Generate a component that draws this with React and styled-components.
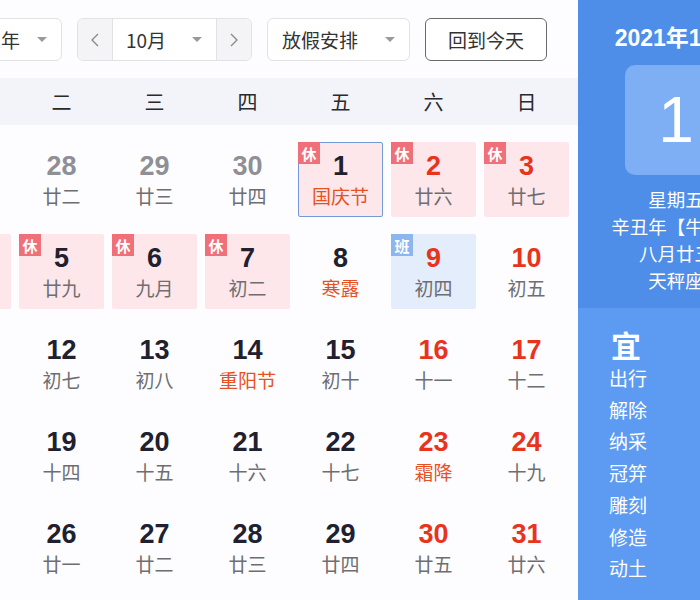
import React from 'react';
import styled, { createGlobalStyle } from 'styled-components';

const GlobalStyle = createGlobalStyle`
  html, body { margin: 0; padding: 0; background: #fdfdff; overflow: hidden; }
  body { font-family: "Liberation Sans", "Noto Sans CJK SC", sans-serif; }
  * { box-sizing: border-box; }
`;

const Widget = styled.div`
  display: flex;
  width: 852px;
  height: 600px;
  margin-left: -78px;
`;

const Main = styled.div`
  flex: none;
  width: 656px;
  display: flex;
  flex-direction: column;
`;

const Toolbar = styled.div`
  display: flex;
  gap: 15px;
  padding: 18px 0 0 28px;
  height: 61px;
  margin-bottom: 17px;
`;

const Select = styled.div`
  display: flex;
  align-items: center;
  justify-content: ${(p) => (p.$tight ? 'flex-end' : 'space-between')};
  gap: 17px;
  width: ${(p) => p.$w}px;
  height: 43px;
  padding: 0 14px 0 ${(p) => p.$pl || 14}px;
  border: 1px solid #e2e2e6;
  border-radius: 6px;
  background: #fff;
  font-family: "Noto Sans CJK SC", "Liberation Sans", sans-serif;
  font-size: 19px;
  color: #333;
  white-space: nowrap;
`;

const Caret = styled.span`
  flex: none;
  width: 0;
  height: 0;
  border-left: 5px solid transparent;
  border-right: 5px solid transparent;
  border-top: 5px solid #9a9a9a;
`;

const Group = styled.div`
  display: flex;
  height: 43px;
  border: 1px solid #e2e2e6;
  border-radius: 6px;
  overflow: hidden;
  background: #fff;
`;

const Arrow = styled.div`
  width: 35px;
  display: flex;
  align-items: center;
  justify-content: center;
  background: #f4f4f6;
  border-${(p) => (p.$side === 'left' ? 'right' : 'left')}: 1px solid #e2e2e6;
`;

const GroupSelect = styled(Select)`
  border: none;
  border-radius: 0;
  height: 41px;
`;

const TodayButton = styled.div`
  width: 122px;
  height: 43px;
  display: flex;
  align-items: center;
  justify-content: center;
  border: 1px solid #6a6a6e;
  border-radius: 6px;
  background: #fff;
  font-family: "Noto Sans CJK SC", sans-serif;
  font-size: 19px;
  color: #333;
`;

const WeekBand = styled.div`
  display: grid;
  grid-template-columns: repeat(7, 93px);
  height: 47px;
  align-items: center;
  background: #f2f4fa;
  font-family: "Noto Sans CJK SC", sans-serif;
  font-size: 20px;
  color: #2a2a2a;
  text-align: center;
`;

const Grid = styled.div`
  display: grid;
  grid-template-columns: repeat(7, 93px);
  grid-auto-rows: 75px;
  row-gap: 17px;
  padding-top: 17px;
`;

const Cell = styled.div`
  position: relative;
  margin: 0 4px;
  display: flex;
  flex-direction: column;
  align-items: center;
  padding-top: 9px;
  border-radius: 2px;
  background: ${(p) => (p.$kind === 'rest' ? '#fde7ea' : p.$kind === 'work' ? '#e3edfb' : 'transparent')};
  border: 1px solid ${(p) => (p.$selected ? '#7399d6' : 'transparent')};
`;

const Badge = styled.span`
  position: absolute;
  top: -1px;
  left: -1px;
  width: 22px;
  height: 22px;
  display: flex;
  align-items: center;
  justify-content: center;
  background: ${(p) => (p.$work ? '#8db6ee' : '#f07079')};
  color: #fff;
  font-family: "Noto Sans CJK SC", sans-serif;
  font-size: 15px;
  font-weight: 700;
  line-height: 1;
`;

const DayNum = styled.div`
  font-size: 27px;
  font-weight: 700;
  line-height: 28px;
  color: ${(p) => (p.$tone === 'other' ? '#8f8f96' : p.$tone === 'red' ? '#e8341c' : '#20202e')};
`;

const Lunar = styled.div`
  margin-top: 4px;
  font-family: "Noto Sans CJK SC", sans-serif;
  font-size: 19px;
  line-height: 24px;
  color: ${(p) => (p.$fest ? '#e6511f' : '#6e6e72')};
`;

const Panel = styled.div`
  flex: none;
  width: 196px;
  display: flex;
  flex-direction: column;
  color: #fff;
  font-family: "Noto Sans CJK SC", sans-serif;
`;

const PanelTop = styled.div`
  height: 308px;
  background: #4e8de8;
  display: flex;
  flex-direction: column;
  align-items: center;
  padding-top: 23px;
`;

const PanelTitle = styled.div`
  font-family: "Liberation Sans", "Noto Sans CJK SC", sans-serif;
  font-size: 23px;
  font-weight: 700;
  line-height: 30px;
  white-space: nowrap;
`;

const BigDay = styled.div`
  margin-top: 12px;
  width: 102px;
  height: 110px;
  border-radius: 10px;
  background: #7eaef4;
  display: flex;
  align-items: center;
  justify-content: center;
  font-family: "Liberation Sans", sans-serif;
  font-size: 64px;
  line-height: 1;
`;

const InfoLines = styled.div`
  margin-top: 11px;
  display: flex;
  flex-direction: column;
  align-items: center;
  font-size: 18.5px;
  line-height: 27px;
  white-space: nowrap;
`;

const PanelBottom = styled.div`
  flex: 1;
  background: #5c9bf1;
  padding: 18px 0 0 33px;
`;

const YiTitle = styled.div`
  font-size: 30px;
  font-weight: 700;
  line-height: 36px;
`;

const YiItem = styled.div`
  font-size: 19px;
  line-height: 31.7px;
  margin-left: -2px;
`;

const Chevron = ({ dir }) => (
  <svg width="10" height="16" viewBox="0 0 10 16">
    <polyline
      points={dir === 'left' ? '8,2 2,8 8,14' : '2,2 8,8 2,14'}
      fill="none"
      stroke="#8a8a8e"
      strokeWidth="1.4"
    />
  </svg>
);

const weeks = ['一', '二', '三', '四', '五', '六', '日'];

// [day, lunar, tone, kind, fest, selected]
const rows = [
  [
    [27, '廿一', 'other'], [28, '廿二', 'other'], [29, '廿三', 'other'], [30, '廿四', 'other'],
    [1, '国庆节', 'dark', 'rest', true, true], [2, '廿六', 'red', 'rest'], [3, '廿七', 'red', 'rest'],
  ],
  [
    [4, '廿八', 'dark', 'rest'], [5, '廿九', 'dark', 'rest'], [6, '九月', 'dark', 'rest'], [7, '初二', 'dark', 'rest'],
    [8, '寒露', 'dark', null, true], [9, '初四', 'red', 'work'], [10, '初五', 'red'],
  ],
  [
    [11, '初六', 'dark'], [12, '初七', 'dark'], [13, '初八', 'dark'], [14, '重阳节', 'dark', null, true],
    [15, '初十', 'dark'], [16, '十一', 'red'], [17, '十二', 'red'],
  ],
  [
    [18, '十三', 'dark'], [19, '十四', 'dark'], [20, '十五', 'dark'], [21, '十六', 'dark'],
    [22, '十七', 'dark'], [23, '霜降', 'red', null, true], [24, '十九', 'red'],
  ],
  [
    [25, '二十', 'dark'], [26, '廿一', 'dark'], [27, '廿二', 'dark'], [28, '廿三', 'dark'],
    [29, '廿四', 'dark'], [30, '廿五', 'red'], [31, '廿六', 'red'],
  ],
];

const yi = ['出行', '解除', '纳采', '冠笄', '雕刻', '修造', '动土'];

export default function App() {
  return (
    <>
      <GlobalStyle />
      <Widget>
        <Main>
          <Toolbar>
            <Select $w={112} $tight>
              <span>2021年</span>
              <Caret />
            </Select>
            <Group>
              <Arrow $side="left"><Chevron dir="left" /></Arrow>
              <GroupSelect $w={103} $pl={13}>
                <span>10月</span>
                <Caret />
              </GroupSelect>
              <Arrow $side="right"><Chevron dir="right" /></Arrow>
            </Group>
            <Select $w={143}>
              <span>放假安排</span>
              <Caret />
            </Select>
            <TodayButton>回到今天</TodayButton>
          </Toolbar>
          <WeekBand>
            {weeks.map((w) => (
              <span key={w}>{w}</span>
            ))}
          </WeekBand>
          <Grid>
            {rows.flat().map(([d, l, tone, kind, fest, sel], i) => (
              <Cell key={i} $kind={kind} $selected={sel}>
                {kind === 'rest' && <Badge>休</Badge>}
                {kind === 'work' && <Badge $work>班</Badge>}
                <DayNum $tone={tone}>{d}</DayNum>
                <Lunar $fest={fest}>{l}</Lunar>
              </Cell>
            ))}
          </Grid>
        </Main>
        <Panel>
          <PanelTop>
            <PanelTitle>2021年10月</PanelTitle>
            <BigDay>1</BigDay>
            <InfoLines>
              <span>星期五</span>
              <span>辛丑年【牛年】</span>
              <span>八月廿五</span>
              <span>天秤座</span>
            </InfoLines>
          </PanelTop>
          <PanelBottom>
            <YiTitle>宜</YiTitle>
            {yi.map((y) => (
              <YiItem key={y}>{y}</YiItem>
            ))}
          </PanelBottom>
        </Panel>
      </Widget>
    </>
  );
}
